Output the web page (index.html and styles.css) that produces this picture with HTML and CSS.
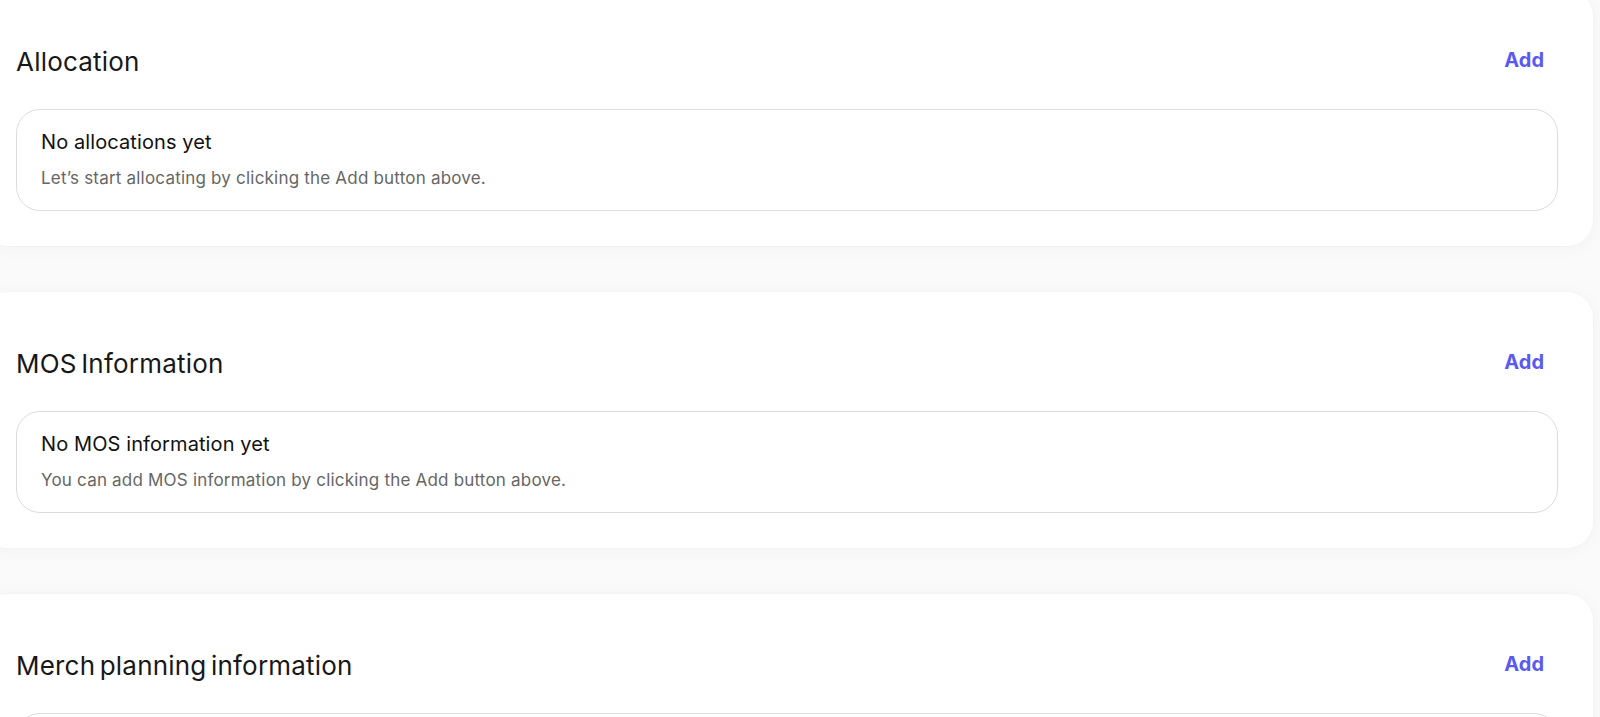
FILE: index.html
```html
<!DOCTYPE html>
<html lang="en">
<head>
<meta charset="utf-8">
<title>Sections</title>
<link rel="stylesheet" href="styles.css">
</head>
<body>
<main class="sections">
  <section class="card">
    <header class="card-head">
      <h2 class="card-title">Allocation</h2>
      <button class="add-btn" type="button">Add</button>
    </header>
    <div class="empty">
      <p class="empty-title">No allocations yet</p>
      <p class="empty-text">Let’s start allocating by clicking the Add button above.</p>
    </div>
  </section>
  <section class="card">
    <header class="card-head">
      <h2 class="card-title">MOS Information</h2>
      <button class="add-btn" type="button">Add</button>
    </header>
    <div class="empty">
      <p class="empty-title">No MOS information yet</p>
      <p class="empty-text">You can add MOS information by clicking the Add button above.</p>
    </div>
  </section>
  <section class="card">
    <header class="card-head">
      <h2 class="card-title">Merch planning information</h2>
      <button class="add-btn" type="button">Add</button>
    </header>
    <div class="empty">
      <p class="empty-title">No merch planning information yet</p>
      <p class="empty-text">You can add merch planning information by clicking the Add button above.</p>
    </div>
  </section>
</main>
</body>
</html>
```

FILE: styles.css
```css
* { box-sizing: border-box; }

html, body {
  margin: 0;
  padding: 0;
  background: #fafafa;
  overflow: hidden;
}

body {
  font-family: Inter, "Liberation Sans", sans-serif;
  color: #111;
}

.sections {
  display: flex;
  flex-direction: column;
  gap: 46px;
  margin: -10px 7px 0 -19px;
}

.card {
  background: #fff;
  border-radius: 26px;
  padding: 56px 35px 35px;
  box-shadow: 0 2px 18px rgba(0, 0, 0, 0.035), 0 0 0 1px rgba(0, 0, 0, 0.012);
}

.card-head {
  display: flex;
  align-items: center;
  justify-content: space-between;
  margin-bottom: 31px;
}

.card-title {
  margin: 0;
  font-size: 26px;
  line-height: 32px;
  font-weight: 400;
  letter-spacing: 0.2px;
  word-spacing: -3px;
  color: #181818;
}

.add-btn {
  border: 0;
  background: none;
  padding: 0 14px 4px 0;
  font-family: Inter, "Liberation Sans", sans-serif;
  font-size: 20px;
  line-height: 24px;
  font-weight: 700;
  color: #5a5af0;
  cursor: pointer;
}

.empty {
  border: 1px solid #dcdcdc;
  border-radius: 24px;
  padding: 20px 24px 22px;
}

.empty-title {
  margin: 0 0 14px;
  font-size: 20px;
  line-height: 24px;
  font-weight: 400;
  letter-spacing: 0.1px;
  color: #111;
}

.empty-text {
  margin: 0;
  font-size: 17px;
  line-height: 20px;
  letter-spacing: 0.2px;
  color: #666;
}
```
